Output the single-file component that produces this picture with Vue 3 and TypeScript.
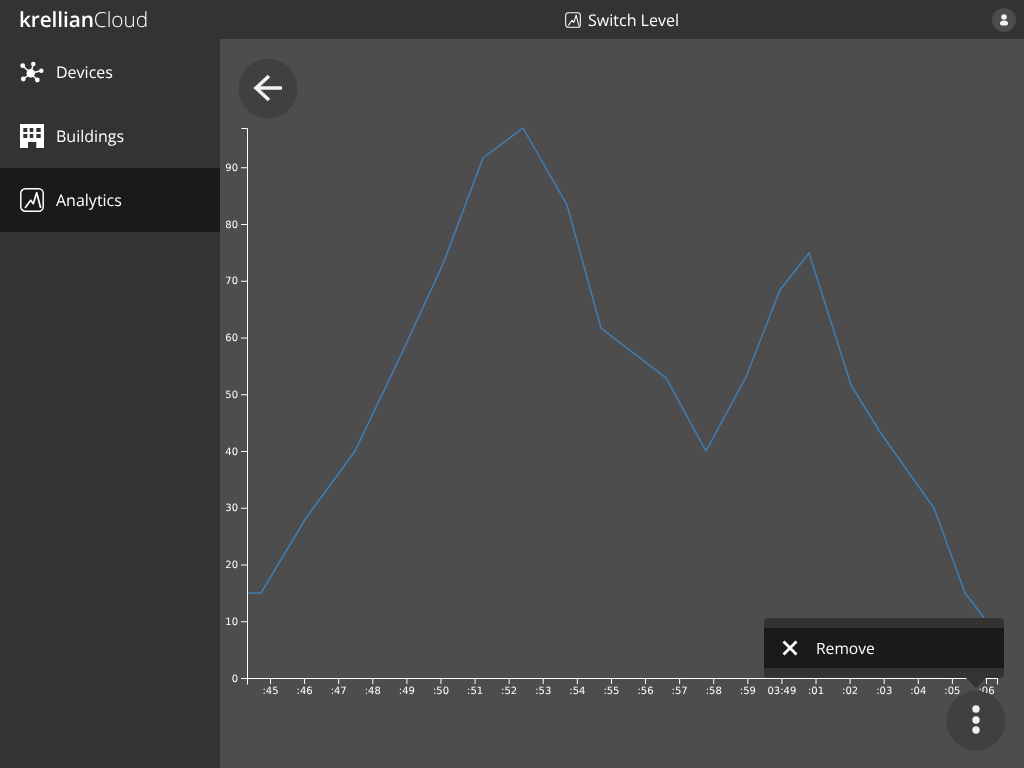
<script setup lang="ts">
const yTicks = [0, 10, 20, 30, 40, 50, 60, 70, 80, 90].map((v) => ({ v, y: 678.5 - v * 5.675 }))
const xLabels = [':45', ':46', ':47', ':48', ':49', ':50', ':51', ':52', ':53', ':54', ':55', ':56', ':57', ':58', ':59', '03:49', ':01', ':02', ':03', ':04', ':05', ':06']
const xTicks = xLabels.map((label, i) => ({ label, x: 270.5 + i * 34.095 }))
const points = '247,593 261,593 306,518 355,451 401,355 443,264 483,158 523,128 567,205 601,328 666,378 706,451 746,377 780,290 809,253 851,385 880,432 934,508 965,593 985,619 998,636'
</script>

<template>
  <div class="app">
    <header class="topbar">
      <div class="logo"><b>krellian</b><span>Cloud</span></div>
      <div class="title">
        <svg class="title-icon" viewBox="0 0 24 24" fill="none" stroke="#fff" stroke-width="1.600" stroke-linejoin="round">
          <rect x="1" y="1" width="22" height="22" rx="4" />
          <path d="M5 20 10.700 12.300l2.600 3.400L16.700 4.700 20.700 20" />
        </svg>
        <span>Switch Level</span>
      </div>
      <div class="avatar">
        <svg viewBox="0 0 24 24" width="24" height="24" fill="#f0f0f0">
          <circle cx="12" cy="9" r="2.800" />
          <path d="M8 15c0-1.500 1.600-2.400 4-2.400s4 .9 4 2.400v.8c0 1-.9 1.600-1.900 1.600H9.900c-1 0-1.900-.6-1.900-1.600z" />
        </svg>
      </div>
    </header>
    <div class="body">
      <nav class="sidebar">
        <a class="item">
          <svg class="icon" viewBox="0 0 24 24" fill="#fff" stroke="#fff">
            <path stroke-width="1.400" d="M10.700 13.300 2.700 5.700M10.700 13.300 13.300 4M10.700 13.300 21.300 10.700M10.700 13.300 3.300 19M10.700 13.300 17.300 20" />
            <circle cx="10.700" cy="13.300" r="4.200" stroke="none" />
            <circle cx="2.700" cy="5.700" r="2.400" stroke="none" />
            <circle cx="13.300" cy="4" r="2.300" stroke="none" />
            <circle cx="21.300" cy="10.700" r="2.200" stroke="none" />
            <circle cx="3.300" cy="19" r="2.400" stroke="none" />
            <circle cx="17.300" cy="20" r="2.400" stroke="none" />
          </svg>
          <span>Devices</span>
        </a>
        <a class="item">
          <svg class="icon" viewBox="0 0 24 24" fill="#fff" fill-rule="evenodd">
            <path d="M0 0h24v24H16.300v-6H8v6H0zM3.300 4v4h4V4zM9.700 4v4h3.600V4zM16.300 4v4h4.400V4zM3.300 10v4h4v-4zM9.700 10v4h3.600v-4zM16.300 10v4h4.400v-4z" />
          </svg>
          <span>Buildings</span>
        </a>
        <a class="item active">
          <svg class="icon" viewBox="0 0 24 24" fill="none" stroke="#fff" stroke-width="1.500" stroke-linejoin="round">
            <rect x="0.800" y="0.800" width="22.400" height="22.400" rx="4.500" />
            <path stroke-width="1.700" d="M5 20 10.700 12.300l2.600 3.400L16.700 4.700 20.700 20" />
          </svg>
          <span>Analytics</span>
        </a>
      </nav>
      <main class="main">
        <button class="fab back" aria-label="Back">
          <svg viewBox="0 0 58 58" width="58" height="58" fill="none" stroke="#f2f2f2" stroke-width="3.600">
            <path d="M17 29h26M30 17 17 29l13 12" />
          </svg>
        </button>
        <svg class="chart" viewBox="220 117 804 651">
          <polyline :points="points" fill="none" stroke="#3f7fb5" stroke-width="1.500" />
          <path d="M241.500 128.500h6v550h750v6M247.500 678.500v6" stroke="#fff" fill="none" />
          <g class="ticks">
            <g v-for="t in yTicks" :key="t.v">
              <line x1="241" x2="247" :y1="t.y" :y2="t.y" stroke="#fff" />
              <text x="238" :y="t.y + 3.200" text-anchor="end">{{ t.v }}</text>
            </g>
            <g v-for="t in xTicks" :key="t.label">
              <line :x1="t.x" :x2="t.x" y1="678" y2="684" stroke="#fff" />
              <text :x="t.x" y="694" text-anchor="middle">{{ t.label }}</text>
            </g>
          </g>
        </svg>
        <div class="menu">
          <div class="menu-row">
            <svg viewBox="0 0 16 16" width="16" height="16" fill="none" stroke="#fff" stroke-width="2.800">
              <path d="M1.500 1.500l13 13M14.500 1.500l-13 13" />
            </svg>
            <span>Remove</span>
          </div>
        </div>
        <button class="fab more" aria-label="More">
          <svg viewBox="0 0 58 58" width="58" height="58" fill="#f0f0f0">
            <circle cx="29" cy="18" r="3.700" />
            <circle cx="29" cy="29" r="3.700" />
            <circle cx="29" cy="39" r="3.700" />
          </svg>
        </button>
      </main>
    </div>
  </div>
</template>

<style scoped>
.app {
  width: 1024px;
  height: 768px;
  overflow: hidden;
  display: flex;
  flex-direction: column;
  font-family: "Open Sans", sans-serif;
  color: #fff;
  background: #333;
  will-change: transform;
  text-rendering: geometricPrecision;
}
.topbar {
  height: 39px;
  flex: none;
  background: #333;
  display: flex;
  align-items: center;
  padding-left: 19px;
}
.logo {
  width: 201px;
  flex: none;
  font-size: 20.800px;
  line-height: 40px;
  white-space: nowrap;
}
.logo b {
  font-weight: 600;
  letter-spacing: -0.1px;
}
.logo span {
  font-weight: 300;
}
.title {
  flex: 1;
  display: flex;
  justify-content: center;
  align-items: center;
  gap: 7px;
  font-size: 16px;
  margin-top: 1px;
}
.title-icon {
  width: 16px;
  height: 16px;
}
.avatar {
  width: 24px;
  height: 24px;
  margin: 1px 8px 0 -32px;
  border-radius: 50%;
  background: #4d4d4d;
}
.avatar svg {
  display: block;
}
.body {
  flex: 1;
  display: flex;
  min-height: 0;
}
.sidebar {
  width: 220px;
  flex: none;
  background: #333;
  padding-top: 1px;
}
.item {
  height: 64px;
  display: flex;
  align-items: center;
  gap: 12px;
  padding-left: 20px;
  font-size: 16px;
}
.item.active {
  background: #1a1a1a;
}
.icon {
  width: 24px;
  height: 24px;
  flex: none;
}
.main {
  position: relative;
  flex: 1;
  background: #4d4d4d;
  overflow: hidden;
}
.fab {
  width: 58px;
  height: 58px;
  border: 0;
  padding: 0;
  border-radius: 50%;
  background: #404040;
  box-shadow: 0 1px 2px rgba(0, 0, 0, 0.25);
}
.fab svg {
  display: block;
}
.back {
  display: block;
  margin: 20px 0 0 19px;
}
.chart {
  display: block;
  width: 804px;
  height: 651px;
}
.ticks text {
  font: 10px "DejaVu Sans", sans-serif;
  fill: #fff;
}
.more {
  position: absolute;
  left: 727px;
  top: 652px;
}
.menu {
  position: absolute;
  left: 544px;
  top: 579px;
  width: 240px;
  padding: 10px 0;
  background: #333;
  border-radius: 4px;
}
.menu::after {
  content: "";
  position: absolute;
  left: 202px;
  top: 60px;
  border: 10px solid transparent;
  border-top-color: #333;
  border-bottom: 0;
}
.menu-row {
  height: 40px;
  display: flex;
  align-items: center;
  gap: 18px;
  padding-left: 18px;
  background: #1a1a1a;
  font-size: 15.600px;
}
</style>
